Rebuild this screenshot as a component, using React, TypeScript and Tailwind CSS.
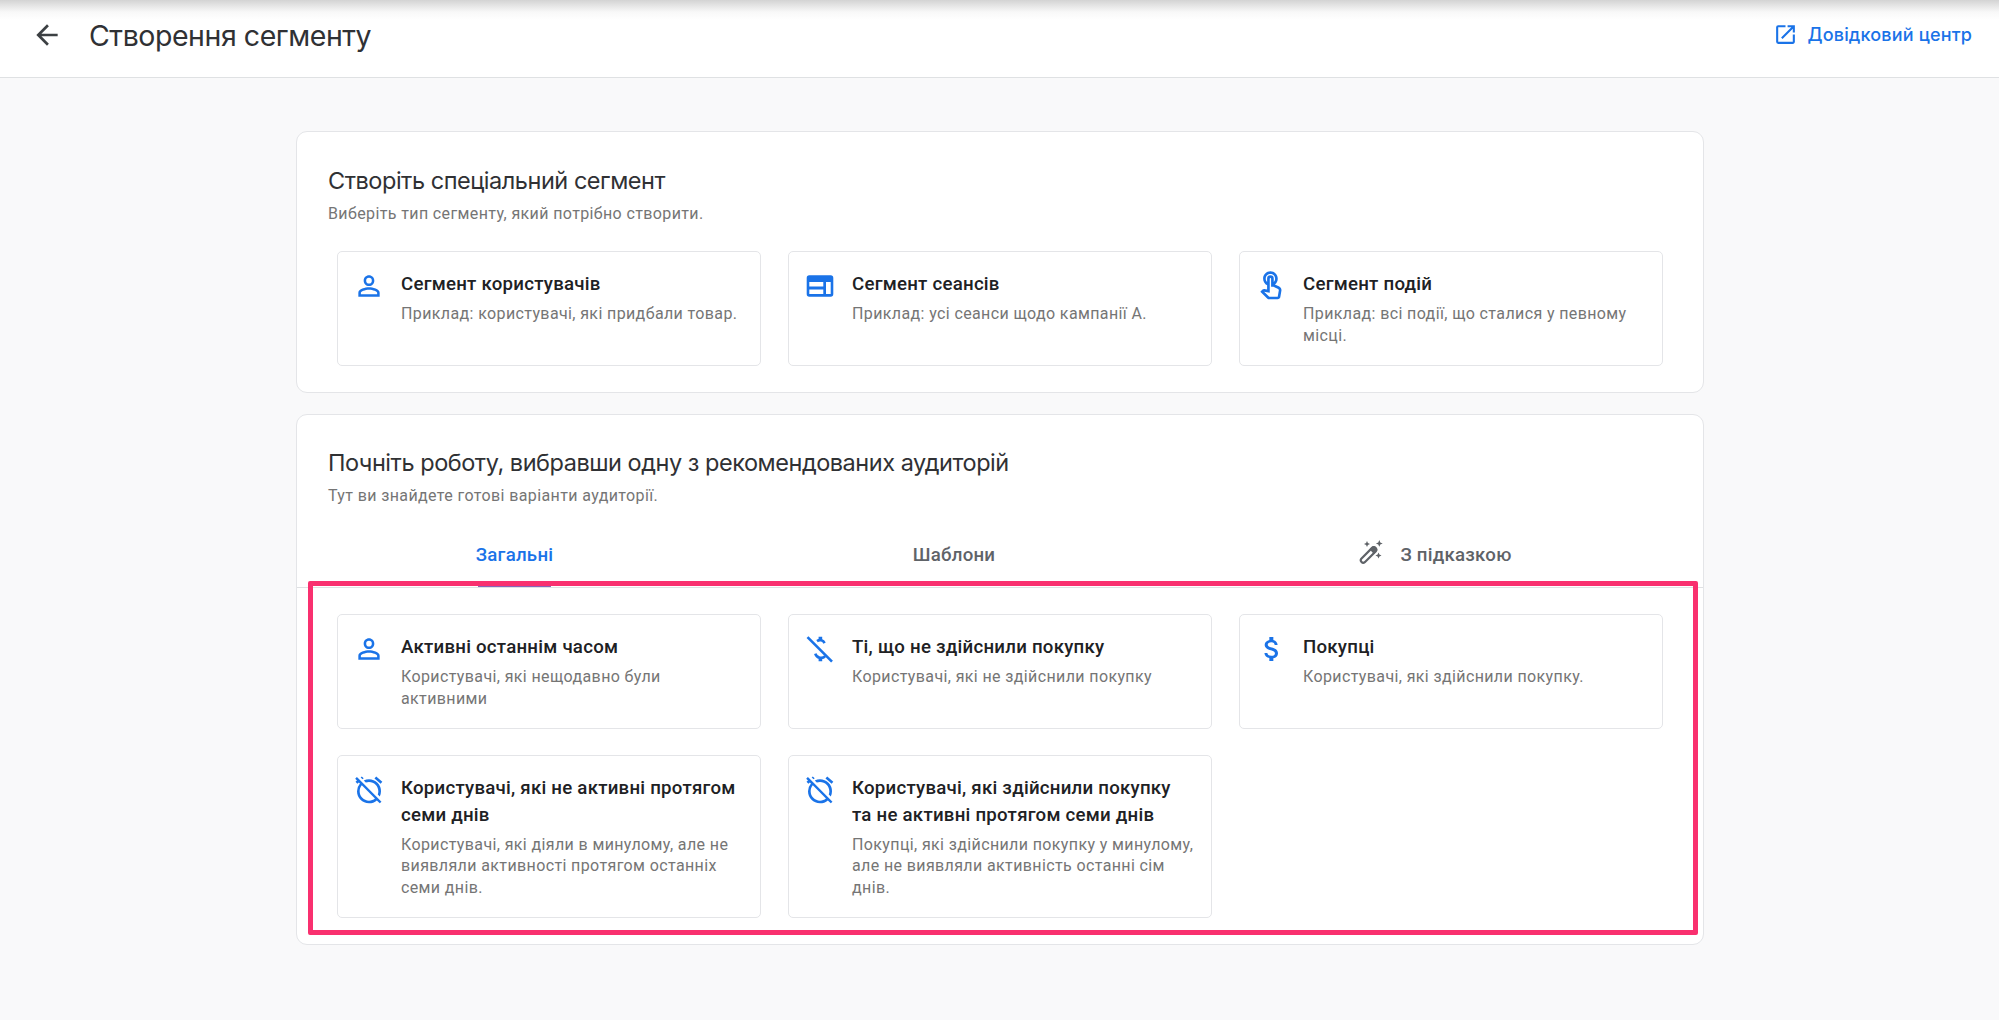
import type { ReactNode } from 'react';
import {
  MdAlarmOff,
  MdArrowBack,
  MdAttachMoney,
  MdOpenInNew,
  MdOutlineTouchApp,
  MdPersonOutline,
} from 'react-icons/md';

interface Segment {
  title: string;
  text: string;
  icon: ReactNode;
}

const WebIcon = () => (
  <svg viewBox="0 0 32 32" className="w-8 h-8" fill="currentColor" fillRule="evenodd">
    <path d="M5.300 5.300h21.400a2.600 2.600 0 0 1 2.600 2.600v16.200a2.600 2.600 0 0 1-2.600 2.600H5.300a2.600 2.600 0 0 1-2.600-2.600V7.900a2.600 2.600 0 0 1 2.600-2.600zM5.300 12v4.600h14V12zM5.300 19.400V24h14v-4.600zM22 12v12h4.700V12z" />
  </svg>
);

const MoneyOffIcon = () => (
  <svg viewBox="0 0 32 32" className="w-8 h-8" fill="none" stroke="currentColor" strokeWidth="2.6">
    <path d="M3.5 4.2 28 28.6" />
    <path d="M16.4 3.8v3M16.4 24.8v3.4" strokeWidth="3.6" />
    <path d="M13 8.1c2.9-1.9 6.300-.8 7.600 2" />
    <path d="M11.300 20.600c1.200 4.600 7.200 5.600 9.900 2.500" />
  </svg>
);

const WandIcon = () => (
  <svg viewBox="0 0 24 24" className="w-6 h-6" fill="currentColor">
    <path
      d="M2.300 18.700 13.300 7.700a2.500 2.500 0 0 1 3.500 3.500L5.800 22.200a2.500 2.500 0 0 1-3.500-3.500z"
      fill="none"
      stroke="currentColor"
      strokeWidth="2.2"
    />
    <path d="m10.500 9.200 2.800-2.800c2-1.500 6 2.200 4.600 4.600l-3 3z" />
    <path d="m8 1 .9 2.100 2.100.9-2.100.9L8 7l-.9-2.100L5 4l2.100-.9zM20.300 0l1 2.400 2.400 1-2.400 1-1 2.400-1-2.400-2.400-1 2.400-1zM19.500 12.500l.9 2.100 2.100.9-2.100.9-.9 2.100-.9-2.100-2.100-.9 2.100-.9z" />
  </svg>
);

const customSegments: Segment[] = [
  {
    title: 'Сегмент користувачів',
    text: 'Приклад: користувачі, які придбали товар.',
    icon: <MdPersonOutline size={32} />,
  },
  {
    title: 'Сегмент сеансів',
    text: 'Приклад: усі сеанси щодо кампанії A.',
    icon: <WebIcon />,
  },
  {
    title: 'Сегмент подій',
    text: 'Приклад: всі події, що сталися у певному місці.',
    icon: <MdOutlineTouchApp size={32} />,
  },
];

const suggestedSegments: Segment[] = [
  {
    title: 'Активні останнім часом',
    text: 'Користувачі, які нещодавно були активними',
    icon: <MdPersonOutline size={32} />,
  },
  {
    title: 'Ті, що не здійснили покупку',
    text: 'Користувачі, які не здійснили покупку',
    icon: <MoneyOffIcon />,
  },
  {
    title: 'Покупці',
    text: 'Користувачі, які здійснили покупку.',
    icon: <MdAttachMoney size={32} className="ml-px" />,
  },
  {
    title: 'Користувачі, які не активні протягом семи днів',
    text: 'Користувачі, які діяли в минулому, але не виявляли активності протягом останніх семи днів.',
    icon: <MdAlarmOff size={32} />,
  },
  {
    title: 'Користувачі, які здійснили покупку та\u00a0не активні протягом семи днів',
    text: 'Покупці, які здійснили покупку у минулому, але не виявляли активність останні сім днів.',
    icon: <MdAlarmOff size={32} />,
  },
];

function SegmentCard({ segment }: { segment: Segment }) {
  return (
    <button className="flex items-start text-left bg-white border border-[#e4e5e8] rounded-[5px] pl-[15px] pr-[15px] pt-[18px]">
      <span className="flex-shrink-0 w-8 h-8 text-[#1a73e8]">{segment.icon}</span>
      <span className="ml-4 flex-1 min-w-0">
        <span className="block text-[18.67px] leading-[26.67px] font-medium tracking-[0.24px] text-[#202124] pt-px">
          {segment.title}
        </span>
        <span className="block mt-[5.6px] text-[16px] leading-[21.33px] tracking-[0.38px] text-[#757575]">
          {segment.text}
        </span>
      </span>
    </button>
  );
}

function SectionHeading({ title, text }: { title: string; text: string }) {
  return (
    <div className="pl-[31px]">
      <h2 className="font-[Inter] text-[23.5px] leading-8 tracking-[-0.47px] text-[#303134]">{title}</h2>
      <p className="mt-[6px] text-[16px] leading-[21px] tracking-[0.38px] text-[#757575]">{text}</p>
    </div>
  );
}

export default function App() {
  return (
    <div className="w-[1999px] h-[1020px] overflow-hidden bg-[#f9f9fa] font-[Roboto,sans-serif]">
      <header className="flex items-start h-[78px] border-b border-[#dfe1e3] bg-white bg-[linear-gradient(to_bottom,#d3d3d3_0px,#e6e6e6_6px,#f8f8f8_12px,#ffffff_20px)] pl-[31px] pr-[27px]">
        <button className="mt-[19px] text-[#3c4043]">
          <MdArrowBack size={32} />
        </button>
        <h1 className="ml-[26px] mt-[16px] font-[Inter] text-[28.5px] leading-10 tracking-[-0.45px] text-[#303134]">
          Створення сегменту
        </h1>
        <a href="#" className="ml-auto mt-[22px] flex items-center text-[#1a73e8]">
          <MdOpenInNew size={25} />
          <span className="ml-[10px] font-[Inter] text-[18px] leading-6 font-medium tracking-[0.16px] pt-px">
            Довідковий центр
          </span>
        </a>
      </header>

      <main className="ml-[296px] w-[1408px]">
        <section className="mt-[53px] h-[262px] bg-white border border-[#e4e5e8] rounded-[11px] pt-[33px]">
          <SectionHeading title="Створіть спеціальний сегмент" text="Виберіть тип сегменту, який потрібно створити." />
          <div className="mt-[27px] mx-10 grid grid-cols-3 gap-[27px] auto-rows-[115px]">
            {customSegments.map((segment) => (
              <SegmentCard key={segment.title} segment={segment} />
            ))}
          </div>
        </section>

        <section className="relative mt-[21px] h-[531px] bg-white border border-[#e4e5e8] rounded-[11px] pt-8">
          <SectionHeading
            title="Почніть роботу, вибравши одну з рекомендованих аудиторій"
            text="Тут ви знайдете готові варіанти аудиторії."
          />

          {/* Tabs */}
          <div className="mt-[17px] h-[65px] flex border-b border-[#dfe1e3] text-[18.67px] font-medium tracking-[0.24px] text-[#5f6368]">
            <button className="w-[435px] flex justify-center text-[#1a73e8]">
              <span className="h-full flex flex-col">
                <span className="flex-1 flex items-center pt-[3px]">Загальні</span>
                <span className="h-[3px] mx-[2px] bg-[#8a63b8]" />
              </span>
            </button>
            <button className="w-[444px] flex items-center justify-center">Шаблони</button>
            <button className="flex-1 flex items-center justify-center pr-2">
              <span className="mr-[17px] -mt-[6px]">
                <WandIcon />
              </span>
              З підказкою
            </button>
          </div>

          <div className="mt-[26px] mx-10 grid grid-cols-3 gap-x-[27px] gap-y-[26px] grid-rows-[115px_163px]">
            {suggestedSegments.map((segment) => (
              <SegmentCard key={segment.title} segment={segment} />
            ))}
          </div>

          {/* Highlight frame over the audience list */}
          <div className="absolute left-[11px] top-[166px] w-[1390px] h-[354px] border-5 border-[#f9306f] rounded-[2px] pointer-events-none" />
        </section>
      </main>
    </div>
  );
}
